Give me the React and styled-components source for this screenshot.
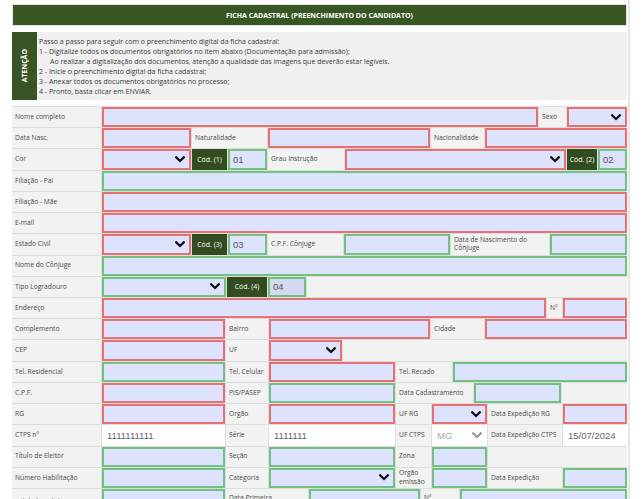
import React from 'react';
import styled, { createGlobalStyle } from 'styled-components';

const GlobalStyle = createGlobalStyle`
  html, body { margin: 0; padding: 0; background: #fff; overflow: hidden; }
  body { font-family: "Open Sans", "Liberation Sans", Arial, sans-serif; color: #333; }
  * { box-sizing: border-box; }
`;

const GREEN = '#375623';
const CODE = '#324c1f';
const LAV = '#dde3fe';
const RED = '#e77070';
const GRN = '#72c27f';

const Page = styled.div`
  width: 630px;
  height: 499px;
  padding: 4px 1px 0 12px;
  border-right: 2px solid #e6e6e6;
  overflow: hidden;
`;

const Header = styled.div`
  height: 22px;
  border: 1px solid #e2e2e2;
  background: ${GREEN};
  color: #fff;
  font-size: 7px;
  font-weight: 700;
  display: flex;
  align-items: center;
  justify-content: center;
`;

const Attention = styled.div`
  margin-top: 6px;
  height: 68px;
  display: flex;
  background: #f0f0f0;
`;

const AttentionTag = styled.div`
  width: 25px;
  background: ${GREEN};
  color: #fff;
  font-size: 7px;
  font-weight: 700;
  display: flex;
  align-items: center;
  justify-content: center;
  span {
    writing-mode: vertical-rl;
    transform: rotate(180deg);
  }
`;

const AttentionText = styled.div`
  flex: 1;
  padding: 5px 2px 0;
  font-size: 7px;
  line-height: 10px;
  color: #3a3a3a;
`;

const Line = styled.div`
  padding-left: ${(p) => (p.$indent ? '11px' : '0')};
  white-space: nowrap;
`;

const Form = styled.div`
  margin-top: 6px;
  padding-top: 1px;
  background: #dedede;
  display: flex;
  flex-direction: column;
  gap: 1px;
`;

const Row = styled.div`
  display: flex;
  gap: 1px;
  height: ${(p) => p.$h || 20.22}px;
  flex-shrink: 0;
`;

const sized = (p) => (p.$w ? `width: ${p.$w}px; flex-shrink: 0;` : 'flex: 1; min-width: 0;');

const Label = styled.div`
  ${sized}
  background: #f2f2f2;
  font-size: 6.7px;
  line-height: 8.4px;
  color: #4a4a4a;
  padding: 0 1px 0 3px;
  display: flex;
  align-items: center;
  overflow: hidden;
`;

const Field = styled.div`
  ${sized}
  background: ${(p) => (p.$dark ? '#d5daf2' : LAV)};
  border: 2px solid ${(p) => (p.$tone === 'green' ? GRN : RED)};
  display: flex;
  align-items: center;
  justify-content: space-between;
  padding: 0 4px 0 3px;
  font-family: "Liberation Sans", Arial, sans-serif;
  font-size: 9.5px;
  color: #555;
`;

const Code = styled.div`
  ${sized}
  background: ${CODE};
  color: #fff;
  font-size: 7px;
  display: flex;
  align-items: center;
  justify-content: center;
  white-space: nowrap;
`;

const Plain = styled.div`
  ${sized}
  background: #fff;
  display: flex;
  align-items: center;
  justify-content: space-between;
  padding: 0 5px;
  font-family: "Liberation Sans", Arial, sans-serif;
  font-size: 9.5px;
  color: ${(p) => (p.$muted ? '#aaa' : '#666')};
`;

const Empty = styled.div`
  ${sized}
  background: #f2f2f2;
`;

const Chevron = ({ color = '#111' }) => (
  <svg width="10" height="7" viewBox="0 0 10 7">
    <path d="M1.2 1.3 L5 5 L8.8 1.3" fill="none" stroke={color} strokeWidth="2.3" strokeLinecap="square" />
  </svg>
);

const rows = [
  [['l', 89, 'Nome completo'], ['i', 436, 'red'], ['l', 27, 'Sexo'], ['s', 0, 'red']],
  [['l', 89, 'Data Nasc.'], ['i', 89, 'red'], ['l', 75, 'Naturalidade'], ['i', 162, 'red'], ['l', 53, 'Nacionalidade'], ['i', 0, 'red']],
  [['l', 89, 'Cor'], ['s', 89, 'red'], ['c', 35, 'Cód. (1)'], ['i', 39, 'green', '01'], ['l', 76, 'Grau Instrução'], ['s', 221, 'red'], ['c', 30, 'Cód. (2)'], ['i', 0, 'green', '02']],
  [['l', 89, 'Filiação - Pai'], ['i', 0, 'green']],
  [['l', 89, 'Filiação - Mãe'], ['i', 0, 'red']],
  [['l', 89, 'E-mail'], ['i', 0, 'red']],
  [['l', 89, 'Estado Civil'], ['s', 89, 'red'], ['c', 35, 'Cód. (3)'], ['i', 39, 'green', '03'], ['l', 75, 'C.P.F. Cônjuge'], ['i', 106, 'green'], ['l', 98, 'Data de Nascimento do Cônjuge'], ['i', 0, 'green']],
  [['l', 89, 'Nome do Cônjuge'], ['i', 0, 'green']],
  [['l', 89, 'Tipo Logradouro'], ['s', 124, 'green'], ['c', 40, 'Cód. (4)'], ['d', 38, 'green', '04'], ['e', 0]],
  [['l', 89, 'Endereço'], ['i', 444, 'red'], ['l', 15, 'Nº'], ['i', 0, 'red']],
  [['l', 89, 'Complemento'], ['i', 123, 'red'], ['l', 42, 'Bairro'], ['i', 161, 'red'], ['l', 53, 'Cidade'], ['i', 0, 'red']],
  [['l', 89, 'CEP'], ['i', 123, 'red'], ['l', 42, 'UF'], ['s', 73, 'red'], ['e', 0]],
  [['l', 89, 'Tel. Residencial'], ['i', 123, 'green'], ['l', 42, 'Tel. Celular'], ['i', 126, 'red'], ['l', 56, 'Tel. Recado'], ['i', 0, 'green']],
  [['l', 89, 'C.P.F.'], ['i', 123, 'red'], ['l', 42, 'PIS/PASEP'], ['i', 126, 'green'], ['l', 77, 'Data Cadastramento'], ['i', 87, 'green'], ['e', 0]],
  [['l', 89, 'RG'], ['i', 123, 'red'], ['l', 42, 'Orgão'], ['i', 126, 'red'], ['l', 35, 'UF RG'], ['s', 55, 'red'], ['l', 74, 'Data Expedição RG'], ['i', 0, 'red']],
  [['l', 89, 'CTPS nº'], ['p', 123, '1111111111'], ['l', 42, 'Série'], ['p', 126, '1111111'], ['l', 35, 'UF CTPS'], ['ps', 55, 'MG'], ['l', 74, 'Data Expedição CTPS'], ['p', 0, '15/07/2024']],
  [['l', 89, 'Título de Eleitor'], ['i', 123, 'green'], ['l', 42, 'Seção'], ['i', 126, 'green'], ['l', 35, 'Zona'], ['i', 55, 'green'], ['e', 0]],
  [['l', 89, 'Número Habilitação'], ['i', 123, 'green'], ['l', 42, 'Categoria'], ['s', 126, 'green'], ['l', 35, 'Orgão emissão'], ['i', 55, 'green'], ['l', 74, 'Data Expedição'], ['i', 0, 'green']],
  [['l', 89, 'Validade Habilitação'], ['i', 123, 'green'], ['l', 82, 'Data Primeira Habilitação'], ['i', 111, 'green'], ['l', 38, 'Nº Registro'], ['i', 0, 'green']],
];

const renderCell = (c, k) => {
  const [t, w, a, b] = c;
  const $w = w || undefined;
  switch (t) {
    case 'l':
      return <Label key={k} $w={$w}>{a}</Label>;
    case 'i':
      return <Field key={k} $w={$w} $tone={a}>{b || ''}</Field>;
    case 'd':
      return <Field key={k} $w={$w} $tone={a} $dark>{b}</Field>;
    case 's':
      return (
        <Field key={k} $w={$w} $tone={a}>
          <span />
          <Chevron />
        </Field>
      );
    case 'c':
      return <Code key={k} $w={$w}>{a}</Code>;
    case 'p':
      return <Plain key={k} $w={$w}>{a}</Plain>;
    case 'ps':
      return (
        <Plain key={k} $w={$w} $muted>
          <span>{a}</span>
          <Chevron color="#999" />
        </Plain>
      );
    default:
      return <Empty key={k} $w={$w} />;
  }
};

export default function App() {
  return (
    <>
      <GlobalStyle />
      <Page>
        <Header>FICHA CADASTRAL (PREENCHIMENTO DO CANDIDATO)</Header>
        <Attention>
          <AttentionTag><span>ATENÇÃO</span></AttentionTag>
          <AttentionText>
            <Line>Passo a passo para seguir com o preenchimento digital da ficha cadastral:</Line>
            <Line>1 - Digitalize todos os documentos obrigatórios no item abaixo (Documentação para admissão);</Line>
            <Line $indent>Ao realizar a digitalização dos documentos, atenção a qualidade das imagens que deverão estar legíveis.</Line>
            <Line>2 - Inicie o preenchimento digital da ficha cadastral;</Line>
            <Line>3 - Anexar todos os documentos obrigatórios no processo;</Line>
            <Line>4 - Pronto, basta clicar em ENVIAR.</Line>
          </AttentionText>
        </Attention>
        <Form>
          {rows.map((r, i) => (
            <Row key={i} $h={i === rows.length - 1 ? 26 : undefined}>
              {r.map((c, j) => renderCell(c, j))}
            </Row>
          ))}
        </Form>
      </Page>
    </>
  );
}
